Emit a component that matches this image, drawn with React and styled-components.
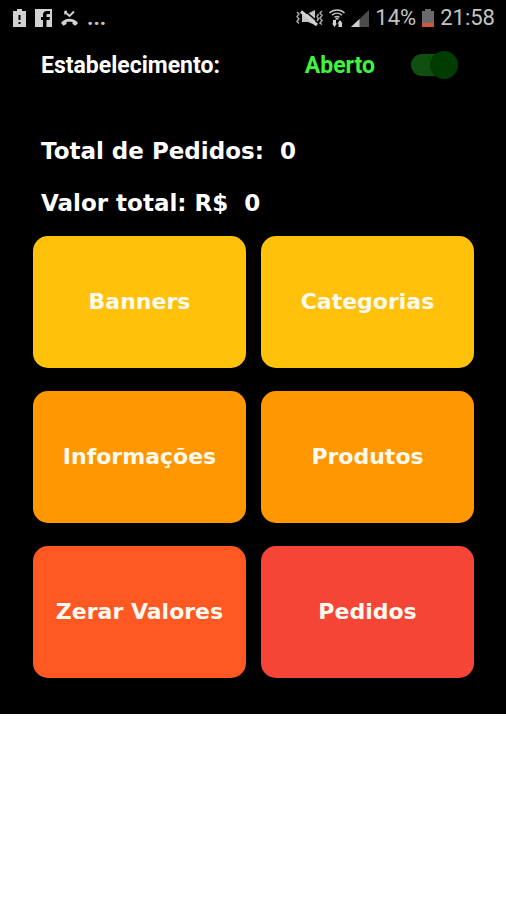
import styled, { createGlobalStyle } from "styled-components";
import { useState } from "react";

const tiles = [
    { name: "Banners", color: "#ffc10a" },
    { name: "Categorias", color: "#ffc10a" },
    { name: "Informações", color: "#ff9800" },
    { name: "Produtos", color: "#ff9800" },
    { name: "Zerar Valores", color: "#ff5823" },
    { name: "Pedidos", color: "#f54537" },
]

export default function App(){
    const [open, setOpen] = useState(true);

    return(
    <>
    <GlobalStyle />
    <Screen>
        <StatusBar>
            <StatusGroup $gap="9px">
                <BatteryAlertIcon />
                <FacebookIcon />
                <MissedCallIcon />
                <StatusText $weight="700">...</StatusText>
            </StatusGroup>
            <StatusGroup $gap="6px">
                <VibrateIcon />
                <WifiIcon />
                <SignalIcon />
                <StatusText>14%</StatusText>
                <BatteryLowIcon />
                <StatusText>21:58</StatusText>
            </StatusGroup>
        </StatusBar>
        <Header>
            <label htmlFor="open">Estabelecimento:</label>
            <HeaderRight>
                <State>{open ? "Aberto" : "Fechado"}</State>
                <Switch id="open" type="checkbox" checked={open} onChange={(e) => setOpen(e.target.checked)} />
            </HeaderRight>
        </Header>
        <Totals>
            <Total><span>Total de Pedidos:</span><span>0</span></Total>
            <Total><span>Valor total: R$</span><span>0</span></Total>
        </Totals>
        <Grid>
            {tiles.map((tile) => (
                <Tile key={tile.name} type="button" $color={tile.color}>{tile.name}</Tile>
            ))}
        </Grid>
    </Screen>
    </>)
}

function BatteryAlertIcon(){
    return(
    <svg width="13" height="18" viewBox="0 0 13 18" aria-hidden="true">
        <path fill="#d2d2d2" d="M4 0h5v2h4v16H0V2h4z" />
        <path fill="#000" d="M5.500 6h2v5h-2zM5.500 13h2v2h-2z" />
    </svg>)
}

function FacebookIcon(){
    return(
    <svg width="17" height="18" viewBox="0 0 17 18" aria-hidden="true">
        <path fill="#d2d2d2" d="M0 0h17v18H0z" />
        <path fill="#000" d="M8 18v-7H6V8h2V6c0-2.700 1.400-4 3.800-4H15v3h-2c-1 0-1.500.4-1.500 1.400V8H15l-.5 3h-3v7z" />
    </svg>)
}

function MissedCallIcon(){
    return(
    <svg width="17" height="16" viewBox="0 0 17 16" aria-hidden="true">
        <path fill="none" stroke="#d2d2d2" strokeWidth="2" d="M4 2L8.500 6L13 1.500" />
        <path fill="none" stroke="#d2d2d2" strokeWidth="1.500" d="M4 4.500V1.500H6" />
        <path fill="#d2d2d2" d="M0 13C4.500 7.400 12.500 7.400 17 13L14.500 15.800L11.500 14V12C9.500 11.600 7.500 11.600 5.500 12V14L2.500 15.800z" />
    </svg>)
}

function VibrateIcon(){
    return(
    <svg width="27" height="18" viewBox="0 0 27 18" aria-hidden="true">
        <path fill="#c4c4c4" d="M6 5h5l8-4v15l-7-3H6z" />
        <path fill="none" stroke="#000" strokeWidth="1.500" d="M8 1L23 14" />
        <path fill="none" stroke="#d2d2d2" strokeWidth="3" d="M5 2.500L21 16" />
        <path fill="none" stroke="#a8a8a8" strokeWidth="1.500" d="M1 3l2 2-2 2.500 2 2.500-2 2.500 2 2M26 2l-2 2 2 2.500-2 2.500 2 2.500-2 2.500 2 1.500M22.500 5L21 7.500 22.500 10 21 12" />
    </svg>)
}

function WifiIcon(){
    return(
    <svg width="16" height="18" viewBox="0 0 16 18" aria-hidden="true">
        <g fill="none" stroke="#c4c4c4" strokeWidth="1.500">
            <path d="M.5 4C4.500 0 11.500 0 15.500 4" />
            <path d="M3 6.300C6 3.400 10 3.400 13 6.300" />
            <path d="M5.500 8.500C7 7 9 7 10.500 8.500" />
        </g>
        <path fill="#d2d2d2" d="M8 8l2 2.500H6zM4 11h3v3.500h1L5.500 18 3 14.500h1zM11 11l2.500 3.500H13V18H9.500v-3.500H8.500z" />
    </svg>)
}

function SignalIcon(){
    return(
    <svg width="18" height="17" viewBox="0 0 18 17" aria-hidden="true">
        <path fill="#4b4b4b" d="M18 0v17H0z" />
        <path fill="#cfcfcf" d="M8.500 9v8H0z" />
    </svg>)
}

function BatteryLowIcon(){
    return(
    <svg width="12" height="18" viewBox="0 0 12 18" aria-hidden="true">
        <path fill="#6b6b6b" d="M3 0h6v2h3v16H0V2h3z" />
        <path fill="#d0573a" d="M0 14h12v4H0z" />
    </svg>)
}

const GlobalStyle = createGlobalStyle`
*{
    box-sizing:border-box;
}
body{
    margin:0;
    background:#fff;
}
`

const Screen = styled.main`
background:#000;
color:white;
padding-bottom:36px;
font-family:Roboto, sans-serif;
`

const StatusBar = styled.div`
display:flex;
justify-content:space-between;
align-items:center;
height:36px;
padding:0 11px 0 13px;
color:#c4c4c4;
`

const StatusGroup = styled.div`
display:flex;
align-items:center;
gap:${props => props.$gap};

svg{
    flex:none;
}
`

const StatusText = styled.span`
font-size:22px;
font-weight:${props => props.$weight || "400"};
line-height:36px;
`

const Header = styled.header`
display:flex;
justify-content:space-between;
align-items:center;
height:58px;
padding:0 48px 0 41px;
font-size:23px;
font-weight:700;
`

const HeaderRight = styled.div`
display:flex;
align-items:center;
gap:36px;
`

const State = styled.span`
color:#3df53d;
`

const Switch = styled.input`
appearance:none;
display:flex;
align-items:center;
width:47px;
height:22px;
margin:0;
border-radius:11px;
background:#114f11;
cursor:pointer;

&::before{
    content:"";
    width:28px;
    height:28px;
    flex:none;
    border-radius:50%;
    background:#003b00;
}
&:checked{
    justify-content:flex-end;
}
`

const Totals = styled.section`
padding:31px 41px 7px;
font-family:"DejaVu Sans", sans-serif;
font-size:23px;
font-weight:700;
line-height:52px;
`

const Total = styled.p`
display:flex;
gap:16px;
margin:0;
`

const Grid = styled.div`
display:grid;
grid-template-columns:1fr 1fr;
gap:23px 15px;
padding:0 32px 0 33px;
`

const Tile = styled.button`
height:132px;
padding:0 0 2px;
border:0;
border-radius:15px;
background:${props => props.$color};
color:#fffaf0;
font-family:"DejaVu Sans", sans-serif;
font-size:22px;
font-weight:700;
cursor:pointer;
`
